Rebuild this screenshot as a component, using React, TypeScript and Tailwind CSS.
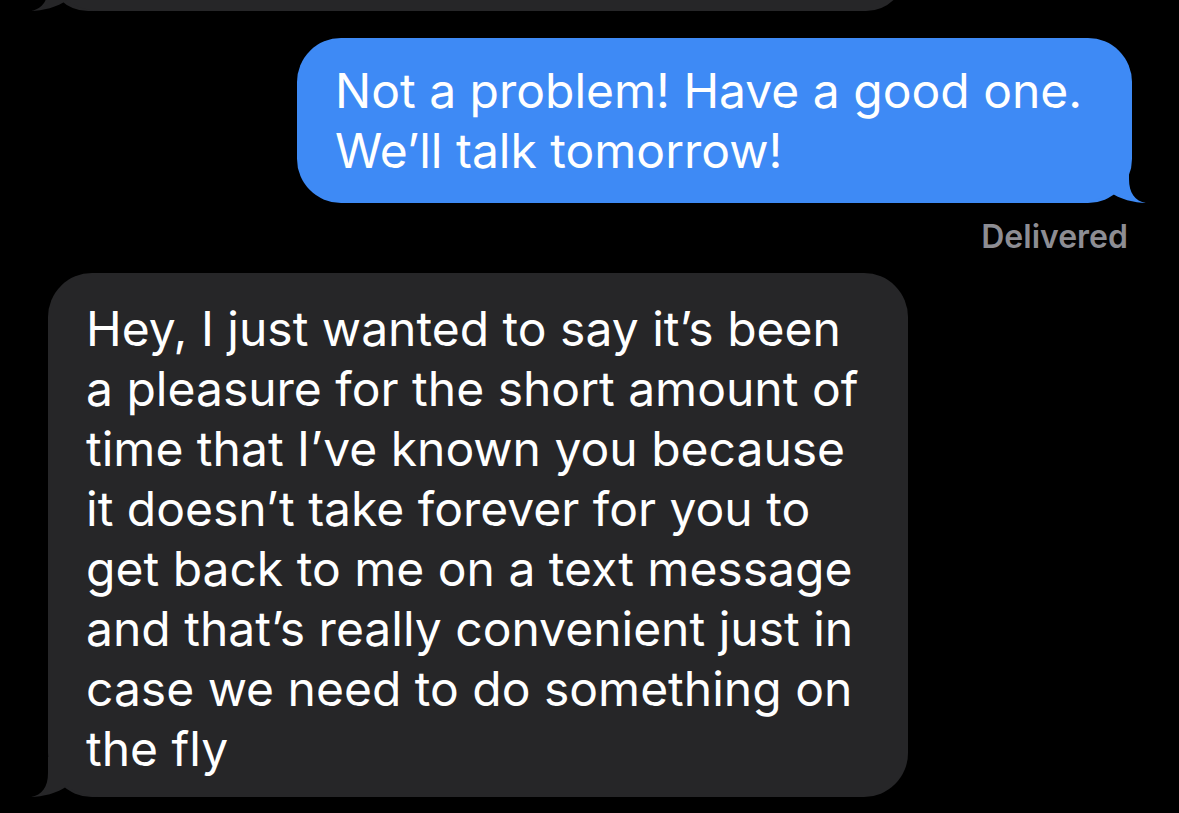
import React from 'react';

const incomingLines = [
  'Hey, I just wanted to say it’s been',
  'a pleasure for the short amount of',
  'time that I’ve known you because',
  'it doesn’t take forever for you to',
  'get back to me on a text message',
  'and that’s really convenient just in',
  'case we need to do something on',
  'the fly',
];

const outgoingLines = ['Not a problem! Have a good one.', 'We’ll talk tomorrow!'];

// bubble tail, drawn for the left side; flipped for the right
const Tail = ({ color, flip }: { color: string; flip?: boolean }) => (
  <svg
    width="70"
    height="40"
    viewBox="0 0 70 40"
    className={flip ? 'absolute bottom-0 right-[-15px] -scale-x-100' : 'absolute bottom-0 left-[-18px]'}
  >
    <path
      d="M18 0 L18 16 C18 30 12 38 1 40 C12 40 28 36 37 29 C46 36 58 40 70 40 L70 0 Z"
      fill={color}
    />
  </svg>
);

export default function App() {
  return (
    <div
      className="w-[1179px] h-[813px] bg-black overflow-hidden flex flex-col text-white"
      style={{ fontFamily: 'Inter, "Noto Sans", sans-serif' }}
    >
      {/* message above, mostly scrolled away */}
      <div className="h-[11px] overflow-hidden flex items-end pl-[48px]">
        <div className="relative w-[858px] h-[80px] shrink-0 bg-[#262628] rounded-[44px]">
          <Tail color="#262628" />
        </div>
      </div>

      {/* outgoing */}
      <div className="flex justify-end pr-[47px] mt-[27px]">
        <div className="relative w-[835px] bg-[#3e8af5] rounded-[44px] pl-[38px] pr-[30px] pt-[23px] pb-[22px] text-[48px] leading-[60px]">
          <Tail color="#3e8af5" flip />
          {outgoingLines.map((l) => (
            <div key={l} className="relative whitespace-nowrap">{l}</div>
          ))}
        </div>
      </div>

      <div className="flex justify-end pr-[51px] mt-[16px] text-[32px] leading-[36px] font-semibold text-[#8d8d93]">
        Delivered
      </div>

      {/* incoming */}
      <div className="flex pl-[48px] mt-[18px]">
        <div className="relative w-[860px] bg-[#262628] rounded-[44px] pl-[38px] pr-[30px] pt-[26px] pb-[18px] text-[48px] leading-[60px]">
          <Tail color="#262628" />
          {incomingLines.map((l) => (
            <div key={l} className="relative whitespace-nowrap">{l}</div>
          ))}
        </div>
      </div>
    </div>
  );
}
